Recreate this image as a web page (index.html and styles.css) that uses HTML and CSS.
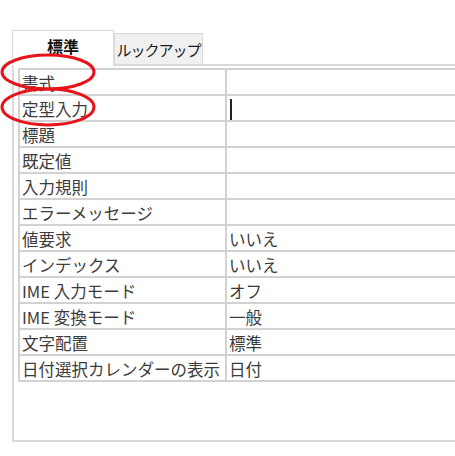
FILE: index.html
```html
<!DOCTYPE html>
<html lang="ja">
<head>
    <meta charset="UTF-8">
    <title>フィールド プロパティ</title>
    <link rel="stylesheet" href="styles.css">
</head>
<body>

<div class="sheet">
    <div class="tabs">
        <div class="tab active">標準</div>
        <div class="tab">ルックアップ</div>
    </div>

    <div class="panel">
        <table class="props">
            <tr><td class="name">書式</td><td class="value"></td></tr>
            <tr><td class="name">定型入力</td><td class="value"><span class="caret"></span></td></tr>
            <tr><td class="name">標題</td><td class="value"></td></tr>
            <tr><td class="name">既定値</td><td class="value"></td></tr>
            <tr><td class="name">入力規則</td><td class="value"></td></tr>
            <tr><td class="name">エラーメッセージ</td><td class="value"></td></tr>
            <tr><td class="name">値要求</td><td class="value">いいえ</td></tr>
            <tr><td class="name">インデックス</td><td class="value">いいえ</td></tr>
            <tr><td class="name">IME 入力モード</td><td class="value">オフ</td></tr>
            <tr><td class="name">IME 変換モード</td><td class="value">一般</td></tr>
            <tr><td class="name">文字配置</td><td class="value">標準</td></tr>
            <tr><td class="name">日付選択カレンダーの表示</td><td class="value">日付</td></tr>
        </table>
    </div>

    <!-- 赤丸で囲んだ注目箇所 -->
    <svg class="marks" width="120" height="140" viewBox="0 0 120 140">
        <ellipse cx="48" cy="72" rx="46" ry="17" fill="none" stroke="#e8141b" stroke-width="3"/>
        <ellipse cx="48" cy="107" rx="46" ry="18" fill="none" stroke="#e8141b" stroke-width="3"/>
    </svg>
</div>

</body>
</html>
```

FILE: styles.css
```css
body {
    margin: 0;
    background-color: #fff;
    font-family: "Noto Sans CJK JP", "Noto Sans", sans-serif;
    color: #3c3c3c;
}
.sheet {
    position: relative;
    width: 455px;
    height: 456px;
    overflow: hidden;
    padding: 30px 0 0 12px;
    box-sizing: border-box;
}
.tabs {
    display: flex;
    align-items: flex-end;
    height: 34px;
}
.tab {
    box-sizing: border-box;
    height: 31px;
    width: 89px;
    border: 1px solid #d9d9d9;
    border-bottom: none;
    background-color: #f0f0f0;
    font-size: 15px;
    letter-spacing: -1px;
    color: #1a1a1a;
    display: flex;
    justify-content: center;
    align-items: center;
}
.tab.active {
    height: 36px;
    width: 102px;
    margin-bottom: -2px;
    background-color: #fff;
    font-size: 16px;
    letter-spacing: 0;
    font-weight: bold;
    color: #111;
    position: relative;
    z-index: 1;
    align-items: flex-start;
    padding-top: 3px;
}
.panel {
    width: 480px;
    height: 378px;
    box-sizing: border-box;
    border: 2px solid #dadada;
    border-right: none;
    padding: 2px 0 0 4px;
}
.props {
    border-collapse: collapse;
    width: 500px;
    font-size: 16.5px;
}
.props td {
    border: 2px solid #d2d2d2;
    height: 24px;
    padding: 0 0 0 2px;
    line-height: 22px;
    vertical-align: bottom;
    white-space: nowrap;
}
.props .name {
    width: 203px;
}
.caret {
    display: inline-block;
    width: 2px;
    height: 21px;
    background-color: #222;
    vertical-align: middle;
    margin-left: 1px;
}
.marks {
    position: absolute;
    left: 0;
    top: 0;
    z-index: 2;
}
```
